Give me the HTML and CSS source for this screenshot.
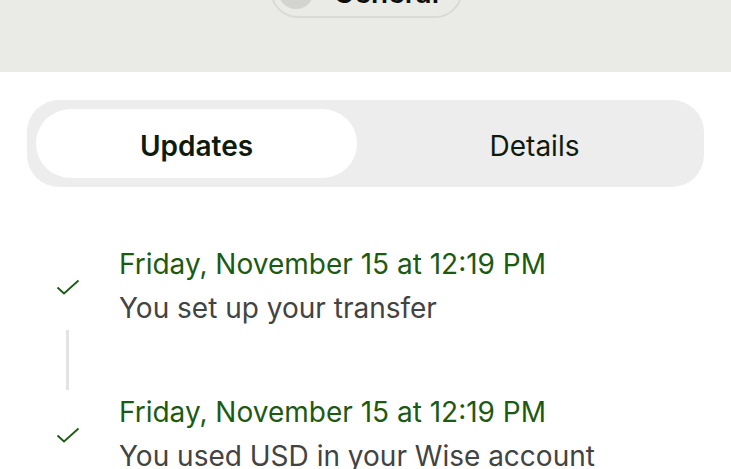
FILE: index.html
```html
<!DOCTYPE html>
<html lang="en">
<head>
    <meta charset="UTF-8">
    <meta name="viewport" content="width=device-width, initial-scale=1.0">
    <title>Transfer activity</title>
    <link rel="stylesheet" href="styles.css">
</head>
<body>
    <header class="top-band">
        <button class="chip">
            <span class="chip-avatar"></span>
            <span class="chip-label">General</span>
        </button>
    </header>

    <div class="tabs">
        <button class="tab active">Updates</button>
        <button class="tab">Details</button>
    </div>

    <!-- Timeline of updates -->
    <div class="timeline">
        <div class="step">
            <div class="step-icon">
                <svg width="24" height="16" viewBox="0 0 24 16"><path d="M1.5 8.5 L8 14.5 L22.5 1.5" fill="none" stroke="#1c5a12" stroke-width="1.8"/></svg>
            </div>
            <div class="step-text">
                <p class="step-date">Friday, November 15 at 12:19 PM</p>
                <p class="step-desc">You set up your transfer</p>
            </div>
        </div>
        <div class="connector"></div>
        <div class="step">
            <div class="step-icon">
                <svg width="24" height="16" viewBox="0 0 24 16"><path d="M1.5 8.5 L8 14.5 L22.5 1.5" fill="none" stroke="#1c5a12" stroke-width="1.8"/></svg>
            </div>
            <div class="step-text">
                <p class="step-date">Friday, November 15 at 12:19 PM</p>
                <p class="step-desc">You used USD in your Wise account</p>
            </div>
        </div>
    </div>
</body>
</html>
```
FILE: styles.css
```css
body {
    font-family: Inter, "Noto Sans", sans-serif;
    margin: 0;
    padding: 0;
    background-color: #fff;
    overflow: hidden;
}

.top-band {
    height: 72px;
    background-color: #eaebe6;
    display: flex;
    justify-content: center;
    align-items: flex-start;
}

.chip {
    margin-top: -38px;
    height: 56px;
    width: 193px;
    margin-left: 1px;
    display: flex;
    align-items: center;
    gap: 20px;
    padding: 0 6px;
    background: transparent;
    border: 2px solid #d9dad5;
    border-radius: 30px;
    font-family: inherit;
}

.chip-avatar {
    width: 36px;
    height: 36px;
    margin-top: 2px;
    border-radius: 50%;
    background-color: #d3d4d0;
}

.chip-label {
    font-size: 28px;
    line-height: 1;
    margin-top: 6px;
    font-weight: 600;
    color: #0e0f0c;
}

.tabs {
    margin: 28px 27px 0;
    padding: 9px;
    height: 69px;
    background-color: #ededed;
    border-radius: 32px;
    display: grid;
    grid-template-columns: 1fr 1fr;
    gap: 17px;
}

.tab {
    border: none;
    background: transparent;
    border-radius: 35px;
    font-family: inherit;
    font-size: 28px;
    padding: 4px 0 0;
    color: #0e1a0c;
    cursor: pointer;
}

.tab.active {
    background-color: #fff;
    font-weight: 600;
}

.timeline {
    margin-top: 55px;
    padding: 0 27px;
    display: flex;
    flex-direction: column;
}

.step {
    display: flex;
    align-items: center;
    gap: 10px;
}

.step-icon {
    width: 82px;
    display: flex;
    justify-content: center;
    padding-top: 2px;
}

.step-text p {
    margin: 0;
    font-size: 28px;
    line-height: 44px;
    white-space: nowrap;
}

.step-date {
    color: #1c5a12;
}

.step-desc {
    color: #424442;
}

.connector {
    width: 3px;
    height: 60px;
    margin-left: 39px;
    background-color: #e3e3e3;
}
```
